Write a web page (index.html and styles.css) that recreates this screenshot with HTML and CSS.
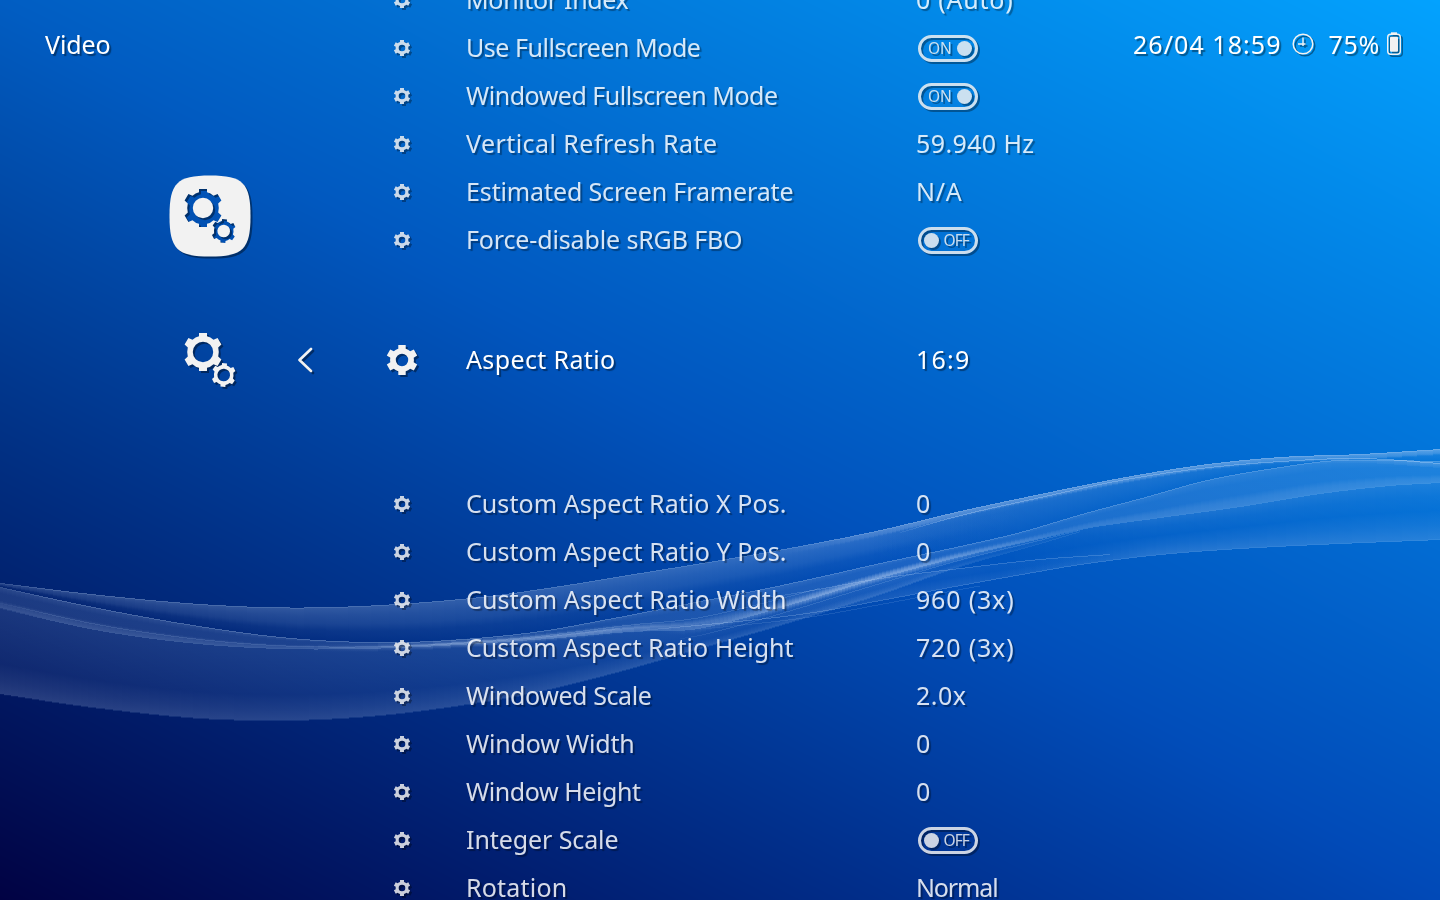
FILE: index.html
```html
<!DOCTYPE html>
<html lang="en">
<head>
<meta charset="utf-8">
<title>Video</title>
<link rel="stylesheet" href="styles.css">
</head>
<body>
<svg width="0" height="0" class="defs">
  <defs>
    <path id="gear" fill-rule="evenodd" d="M-3.7-15H3.7V-11.3Q6.2-10.6 8.2-8.7L11.8-10.6 15.2-4.4 11.7-2.3Q12.2 0 11.7 2.3L15.2 4.4 11.8 10.6 8.2 8.7Q6.2 10.6 3.7 11.3V15H-3.7V11.3Q-6.2 10.6-8.2 8.7L-11.8 10.6-15.2 4.4-11.7 2.3Q-12.2 0-11.7-2.3L-15.2-4.4-11.8-10.6-8.2-8.7Q-6.2-10.6-3.7-11.3ZM6.2 0A6.2 6.2 0 1 0-6.2 0 6.2 6.2 0 1 0 6.2 0Z"/>
    <path id="wide-gear" fill-rule="evenodd" d="M-4-19H4V-15.8Q7.6-15 10.5-12.2L14.6-14 18.4-7.6 15.2-4.6Q16.4 0 15.2 4.6L18.4 7.6 14.6 14 10.5 12.2Q7.6 15 4 15.8V19H-4V15.8Q-7.6 15-10.5 12.2L-14.6 14-18.4 7.6-15.2 4.6Q-16.4 0-15.2-4.6L-18.4-7.6-14.6-14-10.5-12.2Q-7.6-15-4-15.8ZM10.2 0A10.2 10.2 0 1 0-10.2 0 10.2 10.2 0 1 0 10.2 0Z"/>
    <g id="gears"><use href="#wide-gear" x="43" y="42"/><use href="#wide-gear" transform="translate(63.7 65) rotate(4) scale(.62)"/></g>
    <mask id="cutout"><rect width="100" height="100" fill="#fff"/><use href="#gears" fill="#000"/></mask>
  </defs>
</svg>
<canvas class="backdrop" id="backdrop" width="1440" height="900"></canvas>
<div class="screen">
  <header class="topbar">
    <span class="title" data-w="65">Video</span>
    <div class="status">
      <span data-w="148">26/04 18:59</span>
      <svg class="clock" width="24" height="24" viewBox="0 0 24 24" fill="none" stroke="#f2f2f2" stroke-width="1.5"><circle cx="12" cy="12" r="9.8"/><path d="M12 5.500V14M7 12H14.500" stroke-width="1.4"/></svg>
      <span class="percent" data-w="51">75%</span>
      <svg class="battery" width="16" height="26" viewBox="0 0 16 26"><path d="M5 3.500V1.300H11V3.500" fill="#f2f2f2"/><rect x="1.700" y="3.300" width="12.600" height="20" rx="3" fill="none" stroke="#f2f2f2" stroke-width="1.400"/><rect x="4" y="5.800" width="8" height="15" rx="1" fill="#f2f2f2"/></svg>
    </div>
  </header>
  <nav class="tabs">
    <svg class="shadowed" width="100" height="100" viewBox="0 0 100 100"><path d="M9.5 50C9.5 17 17 9.5 50 9.5S90.500 17 90.500 50 83 90.500 50 90.500 9.500 83 9.500 50Z" fill="#f2f2f2" mask="url(#cutout)"/></svg>
    <svg class="shadowed current" width="100" height="100" viewBox="0 0 100 100" fill="#f2f2f2"><use href="#gears"/></svg>
  </nav>
  <svg class="back shadowed" width="24" height="32" viewBox="0 0 24 32"><path d="M17 5L5.500 16 17 27" fill="none" stroke="#f2f2f2" stroke-width="2.600" stroke-linecap="round" stroke-linejoin="round"/></svg>
  <main class="list" id="list"></main>
</div>
<script src="main.js"></script>
</body>
</html>
```
FILE: styles.css
```css
body {
  margin: 0;
  width: 1440px;
  height: 900px;
  overflow: hidden;
  background: #00439c;
  font: 380 25px/48px "Noto Sans", "Open Sans", sans-serif;
  color: #fff;
}
.defs { position: absolute; }
.backdrop { position: absolute; top: 0; left: 0; }
.screen {
  position: relative;
  display: grid;
  grid-template-columns: 160px 100px 30px 88px 1fr;
  height: 900px;
  overflow: hidden;
}
.topbar {
  position: absolute;
  top: 20px;
  left: 45px;
  right: 38px;
  display: flex;
  justify-content: space-between;
}
.status { display: flex; align-items: center; }
.clock { margin-left: 9px; }
.percent { margin-left: 14px; }
.battery { margin-left: 6px; }
.tabs { grid-column: 2; display: flex; flex-direction: column; padding-top: 166px; }
.current { margin-top: 44px; }
.back { grid-column: 4; margin-top: 344px; margin-left: 4px; }
.list { grid-column: 5; margin-top: -24px; }
.row {
  display: grid;
  grid-template-columns: 48px 40px 450px 1fr;
  align-items: center;
  height: 48px;
  opacity: .84;
}
.row-icon { justify-self: center; overflow: visible; }
.row .label { grid-column: 3; }
.label, .value { line-height: 44px; padding-bottom: 2px; }
.row.active { height: 192px; margin-bottom: 24px; opacity: 1; }
.label, .value, .title, .status span { white-space: nowrap; text-shadow: 2px 2px 1px rgba(0, 0, 0, .4); }
.label span, .value span, .title, .status span { display: inline-block; }
.shadowed, .clock, .battery, .row-icon, .toggle { filter: drop-shadow(2px 2px .5px rgba(0, 0, 0, .4)); }
.toggle {
  display: flex;
  align-items: center;
  justify-content: space-between;
  box-sizing: border-box;
  width: 60px;
  height: 27px;
  margin-left: 2px;
  padding: 0 3px 0 7px;
  border: 3px solid #f2f2f2;
  border-radius: 14px;
  color: #f2f2f2;
  font-size: 15.5px;
  line-height: 20px;
}
.toggle b { font-weight: 450; }
.toggle.off { flex-direction: row-reverse; padding: 0 6px 0 3px; }
.toggle i { width: 15px; height: 15px; border-radius: 50%; background: #f2f2f2; }
```
FILE: main.js
```js
const rows = [
  ["Monitor Index", 162, "0 (Auto)", 97],
  ["Use Fullscreen Mode", 234, true],
  ["Windowed Fullscreen Mode", 311, true],
  ["Vertical Refresh Rate", 251, "59.940 Hz", 118],
  ["Estimated Screen Framerate", 327, "N/A", 46],
  ["Force-disable sRGB FBO", 276, false],
  ["Aspect Ratio", 149, "16:9", 54],
  ["Custom Aspect Ratio X Pos.", 320, "0", 14],
  ["Custom Aspect Ratio Y Pos.", 320, "0", 14],
  ["Custom Aspect Ratio Width", 320, "960 (3x)", 98],
  ["Custom Aspect Ratio Height", 327, "720 (3x)", 98],
  ["Windowed Scale", 185, "2.0x", 50],
  ["Window Width", 168, "0", 14],
  ["Window Height", 174, "0", 14],
  ["Integer Scale", 152, false],
  ["Rotation", 101, "Normal", 81]
];
document.getElementById("list").innerHTML = rows.map(([label, w, value, vw], i) => {
  const active = i === 6;
  const size = active ? 30 : 16;
  const right = typeof value === "boolean"
    ? `<div class="toggle ${value ? "on" : "off"}"><b data-w="${value ? 23 : 25}">${value ? "ON" : "OFF"}</b><i></i></div>`
    : `<div class="value"><span data-w="${vw}">${value}</span></div>`;
  return `<div class="row${active ? " active" : ""}"><svg class="row-icon" width="${size}" height="${size}" viewBox="-15 -15 30 30" fill="#f2f2f2"><use href="#gear"/></svg><div class="label"><span data-w="${w}">${label}</span></div>${right}</div>`;
}).join("");

for (const el of document.querySelectorAll("[data-w]")) {
  const n = el.textContent.length;
  const natural = el.getBoundingClientRect().width;
  const target = +el.dataset.w + .5;
  if (n > 1) el.style.letterSpacing = (target - natural) / n + "px";
}

const ctx = document.getElementById("backdrop").getContext("2d");
const W = 1440, H = 900;
const img = ctx.createImageData(W, H);
const BL = [1, 2, 67], BR = [1, 73, 183], TL = [1, 93, 194], TR = [3, 162, 254];
for (let y = 0, p = 0; y < H; y++) {
  const v = 1 - y / H;
  for (let x = 0; x < W; x++, p += 4) {
    const u = x / W;
    for (let c = 0; c < 3; c++) {
      img.data[p + c] = u + v < 1
        ? BL[c] + u * (BR[c] - BL[c]) + v * (TL[c] - BL[c])
        : TR[c] + (1 - u) * (TL[c] - TR[c]) + (1 - v) * (BR[c] - TR[c]);
    }
    img.data[p + 3] = 255;
  }
}
ctx.putImageData(img, 0, 0);

// Smooth interpolation through sampled ribbon edges.
function curve(pts) {
  const n = pts.length;
  const m = pts.map((_, i) => {
    const a = pts[Math.max(0, i - 1)], b = pts[Math.min(n - 1, i + 1)];
    return (b[1] - a[1]) / (b[0] - a[0]);
  });
  return x => {
    let i = 0;
    while (i < n - 2 && x > pts[i + 1][0]) i++;
    const h = pts[i + 1][0] - pts[i][0], t = (x - pts[i][0]) / h, t2 = t * t, t3 = t2 * t;
    return (2 * t3 - 3 * t2 + 1) * pts[i][1] + (t3 - 2 * t2 + t) * h * m[i] + (3 * t2 - 2 * t3) * pts[i + 1][1] + (t3 - t2) * h * m[i + 1];
  };
}
const A = curve([[0, 583], [100, 595], [200, 604], [290, 607.5], [380, 605], [480, 597], [560, 586], [640, 573], [720, 560], [800, 546], [880, 530], [960, 511], [1040, 494], [1120, 478], [1200, 465], [1280, 457], [1360, 454], [1440, 449]]);
const A2 = curve([[900, 532], [960, 515], [1040, 497], [1120, 480], [1200, 468], [1280, 461], [1360, 458], [1440, 463]]);
const B = curve([[0, 587], [83, 605], [180, 623], [280, 637], [366, 642], [440, 640.5], [533, 632], [613, 618], [690, 603], [767, 588], [827, 575], [880, 563], [960, 546], [1020, 532], [1085, 513], [1145, 497], [1207, 480], [1280, 467], [1340, 460], [1440, 461]]);
const C = curve([[0, 608], [100, 630], [197, 643], [280, 648], [360, 648], [440, 645], [547, 638], [630, 631], [690, 629], [733, 620], [800, 601], [873, 579], [960, 556], [1040, 538], [1090, 527], [1160, 517], [1240, 506], [1320, 493], [1390, 485], [1440, 482]]);
const D = curve([[0, 694], [100, 708], [200, 718], [280, 720], [340, 718], [400, 713], [480, 702], [540, 691], [620, 671], [700, 648], [780, 625], [880, 594], [960, 566], [1040, 543], [1090, 528]]);
const E = curve([[620, 632], [747, 620], [813, 612], [880, 600], [960, 585], [1027, 573], [1080, 564], [1160, 554], [1240, 548], [1340, 543], [1440, 539]]);
const F = curve([[740, 601], [800, 592], [880, 578], [960, 568], [1040, 559], [1110, 554]]);

function ribbon(x0, x1, top, bottom, stops) {
  for (let x = x0; x < x1; x++) {
    const a = Math.round(top(x)), b = Math.round(bottom(x));
    if (b <= a) continue;
    const g = ctx.createLinearGradient(0, a, 0, b);
    const fadeIn = x0 === 0 ? 1 : Math.min(1, (x - x0) / 150);
    const fadeOut = x1 === W ? 1 : Math.min(1, (x1 - x) / 150);
    for (const [t, o] of stops) g.addColorStop(t, `rgba(195,215,245,${o * fadeIn * fadeOut})`);
    ctx.fillStyle = g;
    ctx.fillRect(x, a, 1, b - a);
  }
}
function edge(x0, x1, f, alpha, size = 1) {
  for (let x = x0; x < x1; x++) {
    ctx.fillStyle = `rgba(200,225,255,${alpha * Math.min(1, (x - x0 + 20) / 70)})`;
    ctx.fillRect(x, Math.round(f(x)), 1, size);
  }
}
const mix = (f, g, t) => x => f(x) + (g(x) - f(x)) * t;
ribbon(0, 1020, A, B, [[0, .25], [.25, .18], [.5, .13], [.7, .05], [1, .01]]);
ribbon(870, W, A, B, [[0, .22], [.3, .12], [1, .03]]);
ribbon(0, W, B, C, [[0, .22], [.3, .14], [.65, .14], [.82, .23], [1, .28]]);
ribbon(0, 1080, C, D, [[0, .13], [.35, .1], [.65, .08], [.85, .14], [1, .2]]);
ribbon(1000, W, C, E, [[0, .14], [.25, .06], [.5, .02], [.75, .09], [1, .19]]);
ribbon(740, 1110, F, E, [[0, .06], [.5, .04], [1, .12]]);
ribbon(660, 1060, x => C(x) - 5, x => C(x) + 5, [[0, 0], [.5, .45], [1, 0]]);
ribbon(300, 760, x => mix(B, C, .8)(x) - 4, x => mix(B, C, .8)(x) + 5, [[0, 0], [.5, .35], [1, 0]]);
ribbon(780, W, x => A(x), x => A(x) + 6, [[0, .3], [.7, .22], [1, 0]]);
ribbon(1260, W, x => A2(x), x => A2(x) + 5, [[0, .2], [1, .05]]);
edge(0, W, A, .15);
edge(900, W, A2, .3);
edge(0, W, B, .18);
edge(0, W, C, .18);
edge(0, 1080, D, .1);
edge(640, W, E, .24);
edge(760, 1110, F, .2);
edge(0, 620, mix(B, C, .75), .12);
edge(400, 820, mix(B, C, .6), .15);
edge(680, 1080, mix(C, D, .35), .14);
edge(700, 980, x => E(x) + 4, .12);
```
